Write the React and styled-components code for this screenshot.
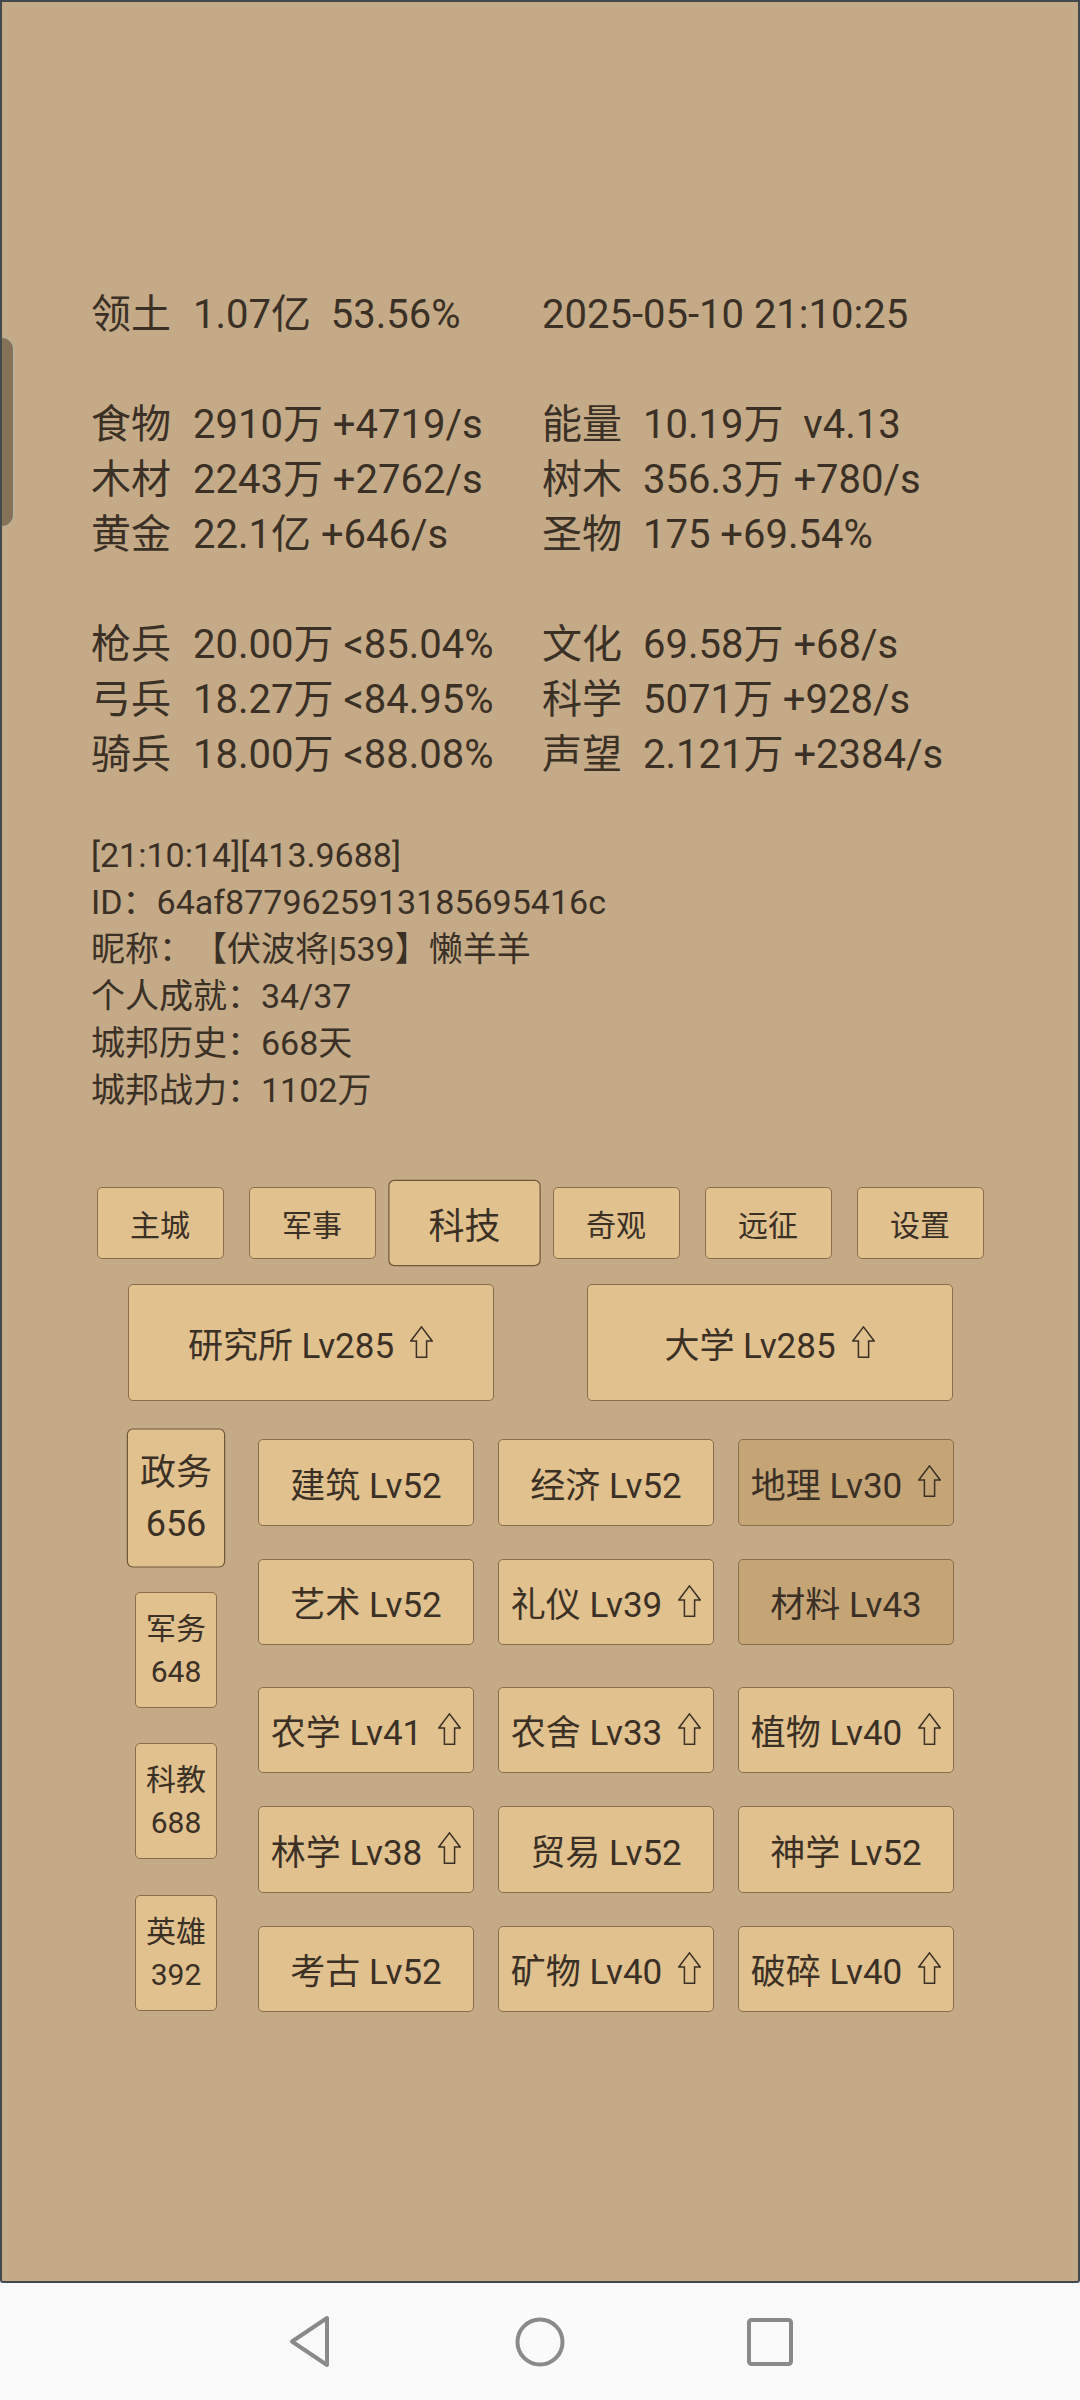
import React from "react";
import styled, { createGlobalStyle, css } from "styled-components";

const GlobalStyle = createGlobalStyle`
  html, body { margin: 0; padding: 0; background: #fafafa; }
  body {
    font-family: Roboto, "Noto Sans CJK SC", sans-serif;
    color: #3a3026;
    text-spacing-trim: space-all;
  }
  * { box-sizing: border-box; }
`;

const Screen = styled.div`
  width: 1080px;
  height: 2400px;
  display: flex;
  flex-direction: column;
  background: #fafafa;
`;

const Frame = styled.div`
  position: relative;
  flex: none;
  height: 2283px;
  background: #c4aa87;
  border: 2px solid #434951;
  border-radius: 0 0 3px 3px;
  padding-top: 285px;
  display: flex;
  flex-direction: column;
  align-items: stretch;
`;

const Handle = styled.div`
  position: absolute;
  left: 0;
  top: 335px;
  width: 12px;
  height: 190px;
  background: #867257;
  border: 1.5px solid #b4b6a6;
  border-left: none;
  border-radius: 0 12px 12px 0;
`;

const StatGrid = styled.div`
  display: grid;
  grid-template-columns: 102px 349px 101px auto;
  grid-auto-rows: 55px;
  padding-left: 89px;
  font-size: 40px;
  line-height: 55px;
  white-space: pre;
`;

const Cell = styled.div`
  ${(p) => p.$span && css`grid-column: span ${p.$span};`}
`;

const BlankRow = styled.div`
  grid-column: 1 / -1;
`;

const InfoBlock = styled.div`
  margin-top: 50px;
  padding-left: 89px;
  font-size: 34px;
  line-height: 47px;
`;

const InfoLine = styled.div`
  white-space: pre;
  text-spacing-trim: space-all;
`;

const TabBar = styled.div`
  margin-top: 73px;
  display: flex;
  justify-content: center;
  gap: 25px;
`;

const buttonBase = css`
  background: ${(p) => (p.$dim ? "#c5a576" : "#e1c18e")};
  border: 1px solid #8a6e4c;
  border-radius: 5px;
  color: #3a3026;
  display: flex;
  align-items: center;
  justify-content: center;
  text-align: center;
  font-family: Roboto, "Noto Sans CJK SC", sans-serif;
`;

const Tab = styled.div`
  ${buttonBase};
  width: 127px;
  height: 72px;
  font-size: 30px;
  ${(p) =>
    p.$active &&
    css`
      transform: scale(1.2);
      border-color: #6f5838;
    `}
`;

const BigRow = styled.div`
  margin-top: 25px;
  display: flex;
  justify-content: center;
  gap: 93px;
`;

const BigButton = styled.div`
  ${buttonBase};
  width: 366px;
  height: 117px;
  font-size: 35px;
  white-space: pre;
`;

const Lower = styled.div`
  margin-top: 38px;
  display: flex;
  justify-content: center;
  gap: 33px;
  padding-left: 1px;
`;

const SideCol = styled.div`
  width: 98px;
  display: flex;
  flex-direction: column;
  align-items: center;
  gap: 35.5px;
  padding-top: 1px;
`;

const SideButton = styled.div`
  ${buttonBase};
  flex-direction: column;
  width: 82px;
  height: 116px;
  font-size: 30px;
  line-height: 43px;
  ${(p) =>
    p.$active &&
    css`
      transform: scale(1.2);
      border-color: #6f5838;
    `}
`;

const TechList = styled.div`
  width: 696px;
  display: flex;
  flex-direction: column;
  gap: 33px;
`;

const TechRow = styled.div`
  display: grid;
  grid-template-columns: repeat(3, 216px);
  column-gap: 24px;
  ${(p) => p.$spaced && css`margin-top: 8.5px;`}
`;

const TechButton = styled.div`
  ${buttonBase};
  height: 86.5px;
  font-size: 35px;
  white-space: pre;
`;

const ArrowSvg = styled.svg`
  margin-left: 16px;
  flex: none;
  align-self: center;
  transform: translateY(-1px);
`;

const NavBar = styled.div`
  flex: 1;
  display: flex;
  justify-content: center;
  align-items: center;
  gap: 150px;
  background: #fafafa;
`;

const NavSlot = styled.div`
  width: 80px;
  display: flex;
  justify-content: center;
  align-items: center;
`;

function UpArrow() {
  return (
    <ArrowSvg width="23" height="32" viewBox="0 0 23 32">
      <path
        d="M11.5 0.9 L22.2 15 L16.6 15 L16.6 31.2 L6.4 31.2 L6.4 15 L0.8 15 Z"
        fill="none"
        stroke="#3a3026"
        strokeWidth="1.5"
        strokeLinejoin="miter"
      />
    </ArrowSvg>
  );
}

function Label({ text, up }) {
  return (
    <>
      <span>{text}</span>
      {up && <UpArrow />}
    </>
  );
}

const stats = [
  [["食物", "2910万 +4719/s"], ["能量", "10.19万  v4.13"]],
  [["木材", "2243万 +2762/s"], ["树木", "356.3万 +780/s"]],
  [["黄金", "22.1亿 +646/s"], ["圣物", "175 +69.54%"]],
  null,
  [["枪兵", "20.00万 <85.04%"], ["文化", "69.58万 +68/s"]],
  [["弓兵", "18.27万 <84.95%"], ["科学", "5071万 +928/s"]],
  [["骑兵", "18.00万 <88.08%"], ["声望", "2.121万 +2384/s"]],
];

const info = [
  "[21:10:14][413.9688]",
  "ID：64af8779625913185695416c",
  "昵称：【伏波将|539】懒羊羊",
  "个人成就：34/37",
  "城邦历史：668天",
  "城邦战力：1102万",
];

const tabs = ["主城", "军事", "科技", "奇观", "远征", "设置"];

const sides = [
  ["政务", "656", true],
  ["军务", "648"],
  ["科教", "688"],
  ["英雄", "392"],
];

const techRows = [
  [["建筑 Lv52"], ["经济 Lv52"], ["地理 Lv30", true, true]],
  [["艺术 Lv52"], ["礼仪 Lv39", true], ["材料 Lv43", false, true]],
  [["农学 Lv41", true], ["农舍 Lv33", true], ["植物 Lv40", true]],
  [["林学 Lv38", true], ["贸易 Lv52"], ["神学 Lv52"]],
  [["考古 Lv52"], ["矿物 Lv40", true], ["破碎 Lv40", true]],
];

export default function App() {
  return (
    <>
      <GlobalStyle />
      <Screen>
        <Frame>
          <Handle />
          <StatGrid>
            <Cell>领土</Cell>
            <Cell>1.07亿  53.56%</Cell>
            <Cell $span={2}>2025-05-10 21:10:25</Cell>
            <BlankRow />
            {stats.map((row, i) =>
              row ? (
                <React.Fragment key={i}>
                  <Cell>{row[0][0]}</Cell>
                  <Cell>{row[0][1]}</Cell>
                  <Cell>{row[1][0]}</Cell>
                  <Cell>{row[1][1]}</Cell>
                </React.Fragment>
              ) : (
                <BlankRow key={i} />
              )
            )}
          </StatGrid>

          <InfoBlock>
            {info.map((l) => (
              <InfoLine key={l}>{l}</InfoLine>
            ))}
          </InfoBlock>

          <TabBar>
            {tabs.map((t) => (
              <Tab key={t} $active={t === "科技"}>
                {t}
              </Tab>
            ))}
          </TabBar>

          <BigRow>
            <BigButton>
              <Label text="研究所 Lv285" up />
            </BigButton>
            <BigButton>
              <Label text="大学 Lv285" up />
            </BigButton>
          </BigRow>

          <Lower>
            <SideCol>
              {sides.map(([a, b, act]) => (
                <SideButton key={a} $active={act}>
                  <div>{a}</div>
                  <div>{b}</div>
                </SideButton>
              ))}
            </SideCol>
            <TechList>
              {techRows.map((row, i) => (
                <TechRow key={i} $spaced={i === 2}>
                  {row.map(([t, up, dim]) => (
                    <TechButton key={t} $dim={dim}>
                      <Label text={t} up={up} />
                    </TechButton>
                  ))}
                </TechRow>
              ))}
            </TechList>
          </Lower>
        </Frame>

        <NavBar>
          <NavSlot>
            <svg width="44" height="53" viewBox="0 0 44 53">
              <path
                d="M39 3 L39 50 L4 26.5 Z"
                fill="none"
                stroke="#8a8a8a"
                strokeWidth="4"
                strokeLinejoin="round"
              />
            </svg>
          </NavSlot>
          <NavSlot>
            <svg width="50" height="50" viewBox="0 0 50 50">
              <circle cx="25" cy="25" r="22.5" fill="none" stroke="#8a8a8a" strokeWidth="4" />
            </svg>
          </NavSlot>
          <NavSlot>
            <svg width="46" height="48" viewBox="0 0 46 48">
              <rect x="2" y="2" width="42" height="44" rx="2.5" fill="none" stroke="#8a8a8a" strokeWidth="4" />
            </svg>
          </NavSlot>
        </NavBar>
      </Screen>
    </>
  );
}
